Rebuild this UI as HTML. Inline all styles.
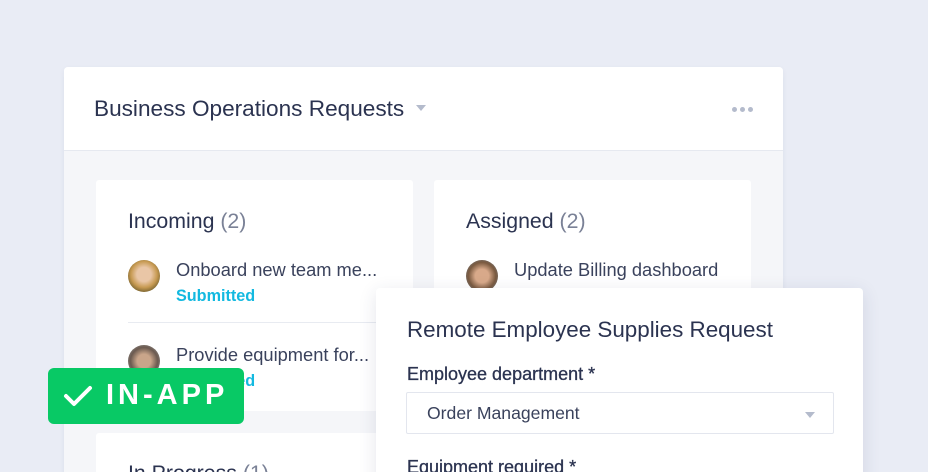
<!DOCTYPE html>
<html><head><meta charset="utf-8"><style>
*{margin:0;padding:0;box-sizing:border-box}
html,body{width:928px;height:472px;overflow:hidden}
body{background:#e9ecf5;font-family:"Liberation Sans",sans-serif;color:#2b3350;position:relative}
.main{position:absolute;left:64px;top:67px;width:719px;height:420px;background:#f5f6f9;border-radius:4px;box-shadow:0 2px 6px rgba(40,50,90,.06)}
.hdr{height:84px;background:#fff;border-bottom:1px solid #e6e9f0;border-radius:4px 4px 0 0;position:relative}
.hdr h1{position:absolute;left:30px;top:29px;font-size:22.6px;font-weight:normal;color:#2b3350;white-space:nowrap}
.caret{display:inline-block;width:0;height:0;border-left:5px solid transparent;border-right:5px solid transparent;border-top:6px solid #b4bbcc;vertical-align:middle;margin-left:12px;position:relative;top:-2px}
.dots{position:absolute;right:30px;top:40px;display:flex;gap:3px}
.dots i{width:5px;height:5px;border-radius:50%;background:#b4bbcc}
.col{position:absolute;background:#fff;border-radius:3px}
.col h2{position:absolute;left:32px;top:29px;font-size:21.3px;font-weight:normal;color:#2b3350;white-space:nowrap}
.col h2 span{color:#7a8196}
.item{position:absolute;left:32px;font-size:18.3px;color:#3a425c}
.av{position:absolute;left:0;top:0;width:32px;height:32px;border-radius:50%}
.item .t{position:absolute;left:48px;top:-1px;white-space:nowrap}
.item .s{position:absolute;left:48px;top:27px;font-size:16.2px;color:#13b9e0;font-weight:bold;white-space:nowrap}
.modal{position:absolute;left:376px;top:288px;width:487px;height:200px;background:#fff;border-radius:4px;box-shadow:0 4px 18px rgba(40,50,90,.12)}
.modal h3{position:absolute;left:31px;top:29px;font-size:22.4px;font-weight:normal;color:#2b3350;white-space:nowrap}
.lbl{position:absolute;left:31px;font-size:18px;color:#2b3350;white-space:nowrap;-webkit-text-stroke:.3px #2b3350}
.sel{position:absolute;left:30px;top:104px;width:428px;height:42px;border:1px solid #e3e6ee;border-radius:2px;font-size:17.6px;color:#3a425c;padding:10px 20px}
.sel .caret{position:absolute;right:18px;top:19px;margin:0;border-top-color:#b4bbcc}
.badge{position:absolute;left:48px;top:368px;width:196px;height:56px;background:#08c965;border-radius:6px;color:#fff;font-size:29px;letter-spacing:4px;font-weight:bold}
.badge svg{position:absolute;left:15px;top:16px}
.badge span{position:absolute;left:58px;top:11px}
</style></head><body>
<div class="main">
<div class="hdr"><h1>Business Operations Requests<span class="caret"></span></h1><div class="dots"><i></i><i></i><i></i></div></div>
</div>
<div class="col" style="left:96px;top:180px;width:317px;height:231px">
<h2>Incoming <span>(2)</span></h2>
<div class="item" style="top:80px"><div class="av" style="background:radial-gradient(circle at 50% 45%,#e9c6a6 30%,#c79a52 55%,#6b5a2a 80%)"></div><div class="t">Onboard new team me...</div><div class="s">Submitted</div></div>
<div style="position:absolute;left:32px;right:0;top:142px;height:1px;background:#e8ebf1"></div>
<div class="item" style="top:165px"><div class="av" style="background:radial-gradient(circle at 50% 50%,#c9a58a 30%,#6b5a50 60%,#8d8a86 85%)"></div><div class="t">Provide equipment for...</div><div class="s">Submitted</div></div>
</div>
<div class="col" style="left:96px;top:433px;width:317px;height:60px"><h2 style="top:28px">In Progress <span>(1)</span></h2></div>
<div class="col" style="left:434px;top:180px;width:317px;height:231px">
<h2>Assigned <span>(2)</span></h2>
<div class="item" style="top:80px"><div class="av" style="background:radial-gradient(circle at 50% 50%,#d8a98a 30%,#7a5a40 60%,#6f6f70 85%)"></div><div class="t">Update Billing dashboard</div></div>
</div>
<div class="modal">
<h3>Remote Employee Supplies Request</h3>
<div class="lbl" style="top:76px">Employee department *</div>
<div class="sel">Order Management<span class="caret"></span></div>
<div class="lbl" style="top:169px">Equipment required *</div>
</div>
<div class="badge"><svg width="30" height="24" viewBox="0 0 30 24"><path d="M3 12 L11 20 L27 4" fill="none" stroke="#fff" stroke-width="4" stroke-linecap="round" stroke-linejoin="round"/></svg><span>IN-APP</span></div>
</body></html>
